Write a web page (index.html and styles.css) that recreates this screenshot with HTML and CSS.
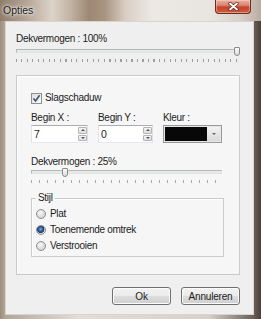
FILE: index.html
```html
<!DOCTYPE html>
<html lang="nl">
	<head>
		<title>Opties</title>
		<link rel="stylesheet" href="styles.css">
	</head>
	<body>
		<div class="window">
			<div class="titlebar">
				<span class="title">Opties</span>
				<span class="close">
					<svg width="11" height="9" viewBox="0 0 11 9">
						<path d="M2 1.5 L9 7.5 M9 1.5 L2 7.5" stroke="#5a2a22" stroke-width="3.4" stroke-linecap="round"/>
						<path d="M2 1.5 L9 7.5 M9 1.5 L2 7.5" stroke="#fff" stroke-width="1.8" stroke-linecap="round"/>
					</svg>
				</span>
			</div>
			<div class="client">
				<div class="label">Dekvermogen : 100%</div>
				<div class="slider">
					<div class="track"><span class="thumb" style="left:217px"></span></div>
					<div class="ticks dense"></div>
				</div>

				<div class="panel">
					<label class="check">
						<span class="box">
							<svg width="9" height="9" viewBox="0 0 9 9">
								<path d="M1.5 4.5 L3.6 7 L7.6 1.2" fill="none" stroke="#3f5070" stroke-width="1.6"/>
							</svg>
						</span>
						Slagschaduw
					</label>

					<div class="fields">
						<div class="field fx">
							<div class="caption">Begin X :</div>
							<div class="spin">
								<span class="value">7</span>
								<span class="arrows">
									<span class="up"></span>
									<span class="down"></span>
								</span>
							</div>
						</div>
						<div class="field fy">
							<div class="caption">Begin Y :</div>
							<div class="spin">
								<span class="value">0</span>
								<span class="arrows">
									<span class="up"></span>
									<span class="down"></span>
								</span>
							</div>
						</div>
						<div class="field fc">
							<div class="caption">Kleur :</div>
							<div class="combo">
								<span class="swatch"></span>
								<span class="drop"></span>
							</div>
						</div>
					</div>

					<div class="label second">Dekvermogen : 25%</div>
					<div class="slider">
						<div class="track"><span class="thumb" style="left:30px"></span></div>
						<div class="ticks sparse"></div>
					</div>

					<fieldset class="group">
						<legend>Stijl</legend>
						<label class="radio"><span class="dot"></span>Plat</label>
						<label class="radio"><span class="dot on"></span>Toenemende omtrek</label>
						<label class="radio"><span class="dot"></span>Verstrooien</label>
					</fieldset>
				</div>

				<div class="buttons">
					<button class="btn">Ok</button>
					<button class="btn">Annuleren</button>
				</div>
			</div>
		</div>
	</body>
</html>
```

FILE: styles.css
```css
*{margin:0;padding:0;box-sizing:border-box;}
body{width:261px;height:319px;overflow:hidden;font-family:"Liberation Sans",Arial,sans-serif;font-size:10px;line-height:12px;letter-spacing:-0.3px;color:#1c1c1c;}

.window{width:261px;height:319px;display:flex;flex-direction:column;background:linear-gradient(90deg,#9d8d7e 0,#b3a596 5px,#e2ddd8 30%,#d6d0ca 80%,#6a5e55 254px,#4a4039 100%);}

.titlebar{height:21px;display:flex;justify-content:space-between;align-items:flex-start;background:linear-gradient(90deg,#8f7d6c 0,#b5a595 10%,#dcd3c9 20%,#c2b3a4 27%,#9e8875 34%,#a8937f 40%,#d8cec4 48%,#ece8e4 58%,#e9e6e2 80%,#d8d0c8 92%,#b9ada2 100%);}
.title{padding:4px 0 0 3px;font-size:10.5px;letter-spacing:0;text-shadow:0 0 5px #fff,0 0 3px #fff;color:#222;}
.close{width:36px;height:14px;margin-right:10px;display:flex;align-items:center;justify-content:center;border:1px solid #6e2a20;border-top:none;border-radius:0 0 4px 4px;background:linear-gradient(#e9b0a2 0,#dc8672 40%,#c4432b 55%,#cf5d3f 100%);box-shadow:inset 0 0 0 1px rgba(255,220,210,.45);}

.client{flex:1;margin:0 7px 4px 5px;padding:11px 13px 0 10px;background:#efefef;border:1px solid #d9d4cf;}

.label{height:12px;}
.slider{margin:4px 2px 0 0;}
.track{position:relative;height:4px;background:#e7eaea;border:1px solid #b8b8b8;border-bottom-color:#e2e2e2;border-right-color:#dadada;}
.thumb{position:absolute;top:-3px;width:6px;height:9px;background:linear-gradient(#fbfbfb,#dcdcdc);border:1px solid #8a8a8a;border-radius:1px 1px 3px 3px;}
.ticks{height:3px;margin-top:6px;}
.dense{background:repeating-linear-gradient(90deg,#9c9c9c 0 1px,transparent 1px 5.5px);}
.sparse{background:repeating-linear-gradient(90deg,#a8a8a8 0 1px,transparent 1px 8px);}

.panel{margin-top:13px;padding:16px 15px 17px 14px;background:#f6f6f6;border:1px solid #cacaca;box-shadow:inset 1px 1px 0 #fff;}

.check{display:flex;align-items:center;gap:3px;height:12px;}
.box{width:11px;height:11px;display:flex;align-items:center;justify-content:center;border:1px solid #8e8f8f;background:linear-gradient(135deg,#dcdcdc,#fbfbfb);}

.fields{display:flex;gap:10px;margin-top:8px;}
.fx{width:57px;}
.fy{width:55px;}
.fc{width:59px;}
.caption{height:13px;}
.spin{height:18px;display:flex;justify-content:space-between;background:#fff;border:1px solid #abadb3;border-right-color:#dbdfe6;border-bottom-color:#e3e9ef;border-left-color:#e2e3ea;}
.value{padding:2px 0 0 2px;font-size:10.5px;}
.arrows{width:9px;display:flex;flex-direction:column;gap:1px;padding:1px 0;}
.up,.down{flex:1;display:flex;align-items:center;justify-content:center;background:linear-gradient(#f4f4f4,#dedede);border:1px solid #b4b4b4;border-radius:1px;}
.up::after{content:"";border:2px solid transparent;border-bottom:2px solid #555;border-top:none;}
.down::after{content:"";border:2px solid transparent;border-top:2px solid #555;border-bottom:none;}

.combo{height:18px;display:flex;padding:1px;background:#e6e6e6;border:1px solid #9a9a9a;}
.swatch{flex:1;background:#080808;}
.drop{width:13px;display:flex;align-items:center;justify-content:center;background:linear-gradient(#f2f2f2,#dadada);}
.drop::after{content:"";border:2px solid transparent;border-top:2px solid #666;border-bottom:none;}

.second{margin-top:13px;}
.panel .slider{margin-top:2px;}

.group{margin-top:9px;padding:0 4px 2px 4px;border:1px solid #cbcbcb;background:#f6f6f6;box-shadow:inset 1px 1px 0 #fff;}
.group legend{padding:0 2px;height:12px;}
.radio{display:flex;align-items:center;gap:4px;height:16px;}
.radio:first-of-type{margin-top:2px;}
.dot{width:10px;height:10px;border-radius:50%;border:1px solid #8d8d8d;background:radial-gradient(circle at 40% 35%,#fafafa,#d4d4d4 70%);}
.dot.on{background:radial-gradient(circle at 45% 40%,#7fa8dc 0,#2c5a9c 35%,#1d3555 55%,#e3e3e3 62%,#cfcfcf 100%);}

.buttons{display:flex;justify-content:flex-end;gap:10px;margin-top:12px;}
.btn{width:59px;height:18px;font-family:inherit;font-size:10px;letter-spacing:-0.2px;color:#1c1c1c;border:1px solid #707070;border-radius:3px;background:linear-gradient(#f2f2f2 0,#ebebeb 50%,#dddddd 51%,#cfcfcf 100%);box-shadow:inset 0 0 0 1px #fcfcfc;}
```
